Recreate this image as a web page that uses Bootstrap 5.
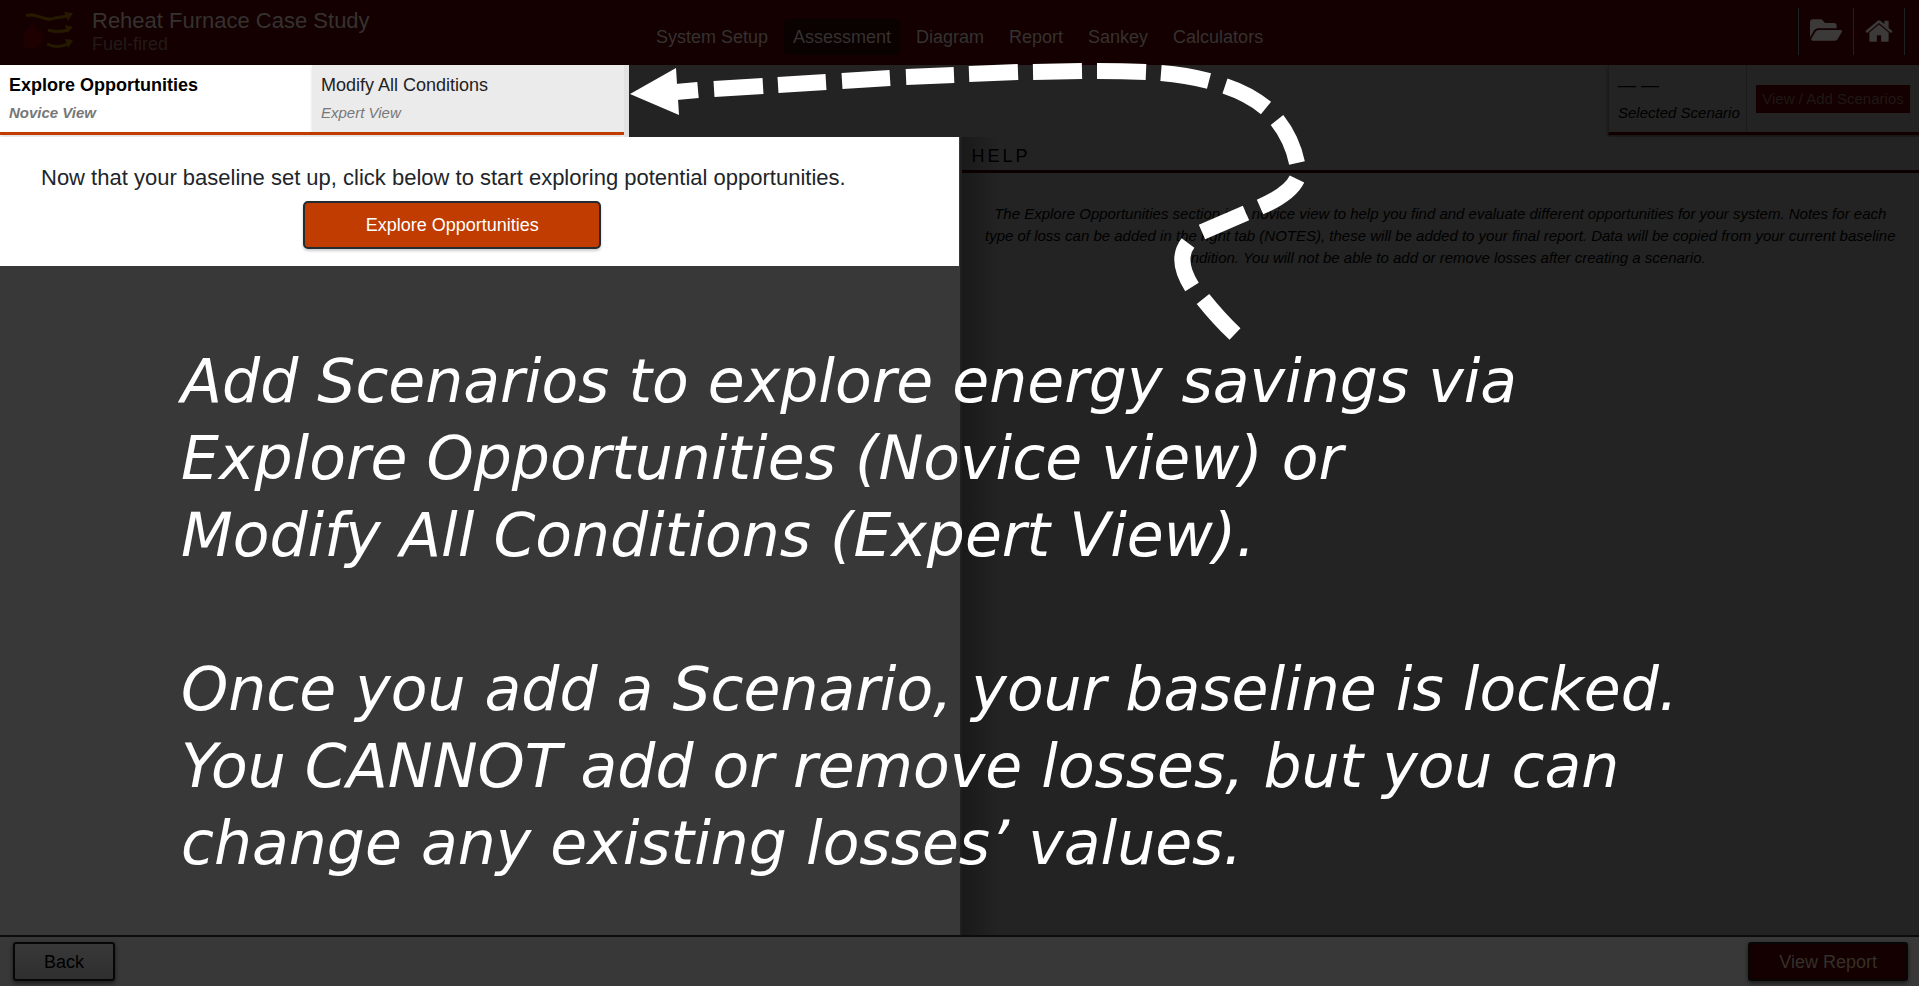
<!DOCTYPE html>
<html lang="en">
<head>
<meta charset="utf-8">
<meta name="viewport" content="width=device-width, initial-scale=1">
<title>Reheat Furnace Case Study</title>
<link href="https://cdn.jsdelivr.net/npm/bootstrap@5.3.0/dist/css/bootstrap.min.css" rel="stylesheet">
<style>
  body { font-family: "Liberation Sans", Arial, sans-serif; font-size: 18px; line-height: 22px; background: #232323; color: #000; }
  a { color: inherit; text-decoration: none; }
  .app-head { height: 65px; background: #140000; color: #353230; }
  .app-title { font-size: 22px; line-height: 26px; }
  .app-kind { color: #221b19; line-height: 20px; }
  .side { flex: 1 1 0; }
  .main-nav { padding-top: 9px; gap: 7px; }
  .main-nav a { padding: 7px 9px; border-radius: 5px; }
  .main-nav a.active { background: #0a0101; }
  .head-icon { height: 47px; border-left: 1px solid #1c2226; padding: 4px 11px 0; color: #3c3a39; }
  .head-icon.home { padding: 8px 10px 0; }
  .head-end { padding: 0; margin-right: 14px; }
  .tab-strip { height: 72px; }
  .view-tabs { width: 629px; background: #fff; }
  .view-tab { width: 312px; height: 70px; padding: 9px 9px 0; border: 0; border-bottom: 3px solid #c03c00; text-align: left; background: #ebebeb; color: #222; box-shadow: 0 2px 3px #0002; }
  .view-tab.active { background: #fff; color: #000; font-weight: 700; }
  .view-tab small, .scenario small { font-size: 15px; line-height: 22px; font-style: italic; display: block; margin-top: 6px; }
  .view-tab small { color: #777; }
  .tab-edge { width: 5px; background: #e2e2e2; }
  .scenario { width: 311px; height: 70px; border-bottom: 3px solid #120000; border-left: 1px solid #1b1b1b; box-shadow: 0 2px 3px #0006; }
  .scenario-name { width: 138px; padding: 9px 9px 0; border-right: 1px solid #1b1b1b; }
  .add-btn { font-size: 15px; line-height: 20px; padding: 4px 6px; border: 0; background: #140000; color: #1f1917; }
  .pane-left { background: #383838; }
  .prompt-box { height: 129px; background: #fff; color: #212529; font-size: 22px; line-height: 28px; padding: 27px 0 0 41px; border-right: 1px solid #383838; }
  .explore-wrap { padding: 9px 95px 0 0; }
  .explore-btn { width: 298px; height: 48px; font-size: 18px; border: 2px solid #222b30; border-radius: 5px; background: #c03c00; color: #fff; box-shadow: 0 2px 3px #0003; }
  .pane-right { background: linear-gradient(90deg, #191919, #232323 36px); border-left: 2px solid #202020; }
  .help-head { height: 36px; margin: 0; padding: 8px 10px 0; font-size: 18px; line-height: 22px; letter-spacing: 3px; font-weight: 400; border-bottom: 3px solid #0a0000; }
  .help-text { font-size: 15px; font-style: italic; padding: 30px 22px; }
  .app-foot { height: 51px; background: #383838; border-top: 2px solid #0c0c0c; padding: 0 11px 0 13px; }
  .foot-btn { height: 39px; border: 2px solid #060606; border-radius: 3px; background: linear-gradient(#383838, #2f2f2f); box-shadow: 0 2px 4px #0008; color: #000; padding: 0 29px; }
  .foot-btn.report { background: #140000; color: #34302b; }
  .guide { pointer-events: none; }
  .guide-arrow { left: 620px; top: 55px; }
  .guide-text { left: 181px; top: 343px; font-family: "DejaVu Sans", sans-serif; font-style: italic; font-size: 60px; line-height: 77px; color: #fff; white-space: nowrap; }
</style>
</head>
<body>
<div class="min-vh-100 d-flex flex-column position-relative overflow-hidden">
  <header class="app-head d-flex">
    <div class="side d-flex">
      <svg class="mt-2 ms-4" width="52" height="46" viewBox="24 8 52 46" fill="none" aria-hidden="true">
        <path d="M30 49C19 45 17 36 22 30l3 4c2-5 6-6 7-12 4 4 3 8 5 11l4-5c-1 5 4 8 1 14-2 5-7 7-12 7z" fill="#1e0000"/>
        <g stroke="#251900" stroke-width="3"><path d="M26 16c10-5 18 7 29 2l13-2"/><path d="M48 30q10 3 20 0"/><path d="M47 44q10 5 21 0"/></g>
        <path d="M64 12l9 1-5 8zM65 25l8 2-6 6zM65 39l8 1-5 8z" fill="#251900"/>
      </svg>
      <div class="pt-2 px-3 ms-n1">
        <div class="app-title">Reheat Furnace Case Study</div>
        <div class="app-kind">Fuel-fired</div>
      </div>
    </div>
    <nav class="main-nav d-flex align-items-center" aria-label="Assessment sections">
      <a href="#setup">System Setup</a><a href="#assessment" class="active">Assessment</a><a href="#diagram">Diagram</a><a href="#report">Report</a><a href="#sankey">Sankey</a><a href="#calculators">Calculators</a>
    </nav>
    <div class="side d-flex justify-content-end pt-2">
      <a href="#files" class="head-icon" aria-label="Open files"><svg width="32" height="36" viewBox="0 0 576 512" fill="currentColor"><path d="M572.694 292.093L500.27 416.248A63.997 63.997 0 0 1 444.989 448H45.025c-18.523 0-30.064-20.093-20.731-36.093l72.424-124.155A64 64 0 0 1 152 256h399.964c18.523 0 30.064 20.093 20.73 36.093zM152 224h328v-48c0-26.51-21.49-48-48-48H272l-64-64H48C21.49 64 0 85.49 0 112v278.046l69.077-118.418C86.214 242.25 117.989 224 152 224z"/></svg></a>
      <a href="#home" class="head-icon home" aria-label="Home"><svg width="30" height="30" viewBox="0 0 1792 1792" fill="currentColor"><path d="M1472 992v480q0 26-19 45t-45 19h-384v-384H768v384H384q-26 0-45-19t-19-45V992q0-1 .5-3t.5-3l575-474 575 474q1 2 1 6zm223-69l-62 74q-8 9-21 11h-3q-13 0-21-7L896 424l-692 577q-12 8-24 7-13-2-21-11l-62-74q-8-10-7-23.500t11-21.500l719-599q32-26 76-26t76 26l244 204V309q0-14 9-23t23-9h192q14 0 23 9t9 23v408l219 182q10 8 11 21.500t-7 23.500z"/></svg></a>
      <span class="head-icon head-end"></span>
    </div>
  </header>

  <div class="tab-strip d-flex justify-content-between">
    <div class="view-tabs d-flex" role="tablist">
      <button class="view-tab active d-flex flex-column" role="tab" aria-selected="true">Explore Opportunities<small>Novice View</small></button>
      <button class="view-tab d-flex flex-column" role="tab" aria-selected="false">Modify All Conditions<small>Expert View</small></button>
      <span class="tab-edge"></span>
    </div>
    <div class="scenario d-flex">
      <div class="scenario-name text-nowrap">— —<small>Selected Scenario</small></div>
      <div class="flex-fill d-flex align-items-center justify-content-center"><button class="add-btn text-nowrap">View / Add Scenarios</button></div>
    </div>
  </div>

  <main class="flex-grow-1 d-flex">
    <section class="pane-left w-50">
      <div class="prompt-box">
        <div>Now that your baseline set up, click below to start exploring potential opportunities.</div>
        <div class="explore-wrap text-center"><button class="explore-btn">Explore Opportunities</button></div>
      </div>
    </section>
    <section class="pane-right w-50">
      <h2 class="help-head">HELP</h2>
      <p class="help-text text-center mb-0">The Explore Opportunities section is a novice view to help you find and evaluate different opportunities for your system. Notes for each type of loss can be added in the right tab (NOTES), these will be added to your final report. Data will be copied from your current baseline condition. You will not be able to add or remove losses after creating a scenario.</p>
    </section>
  </main>

  <footer class="app-foot d-flex justify-content-between align-items-center">
    <button class="foot-btn">Back</button>
    <button class="foot-btn report">View Report</button>
  </footer>

  <!-- Tutorial layer that lies over the dimmed page -->
  <svg class="guide guide-arrow position-absolute" width="700" height="290" viewBox="620 55 700 290" fill="none" stroke="#fff" stroke-width="16" aria-hidden="true">
    <path d="M630 94L676 68 679 115z" fill="#fff" stroke="none"/>
    <path d="M676 92L698 90M714 89L763 86M778 85L826 82M842 81L890 78M906 77L954 75M969 74L1018 72M1033 72L1082 71M1097 71Q1122 71 1146 72M1161 73Q1186 75 1209 81M1225 86Q1249 94 1266 108M1277 120Q1292 139 1297 163M1297 179Q1290 194 1260 207M1246 213L1202 232M1188 243Q1175 260 1192 287M1203 299Q1219 319 1235 334"/>
  </svg>
  <div class="guide guide-text position-absolute">
    <div>Add Scenarios to explore energy savings via</div>
    <div>Explore Opportunities (Novice view) or</div>
    <div>Modify All Conditions (Expert View).</div>
    <div>&nbsp;</div>
    <div>Once you add a Scenario, your baseline is locked.</div>
    <div>You CANNOT add or remove losses, but you can</div>
    <div>change any existing losses’ values.</div>
  </div>
</div>
<script src="https://cdn.jsdelivr.net/npm/bootstrap@5.3.0/dist/js/bootstrap.bundle.min.js"></script>
</body>
</html>
